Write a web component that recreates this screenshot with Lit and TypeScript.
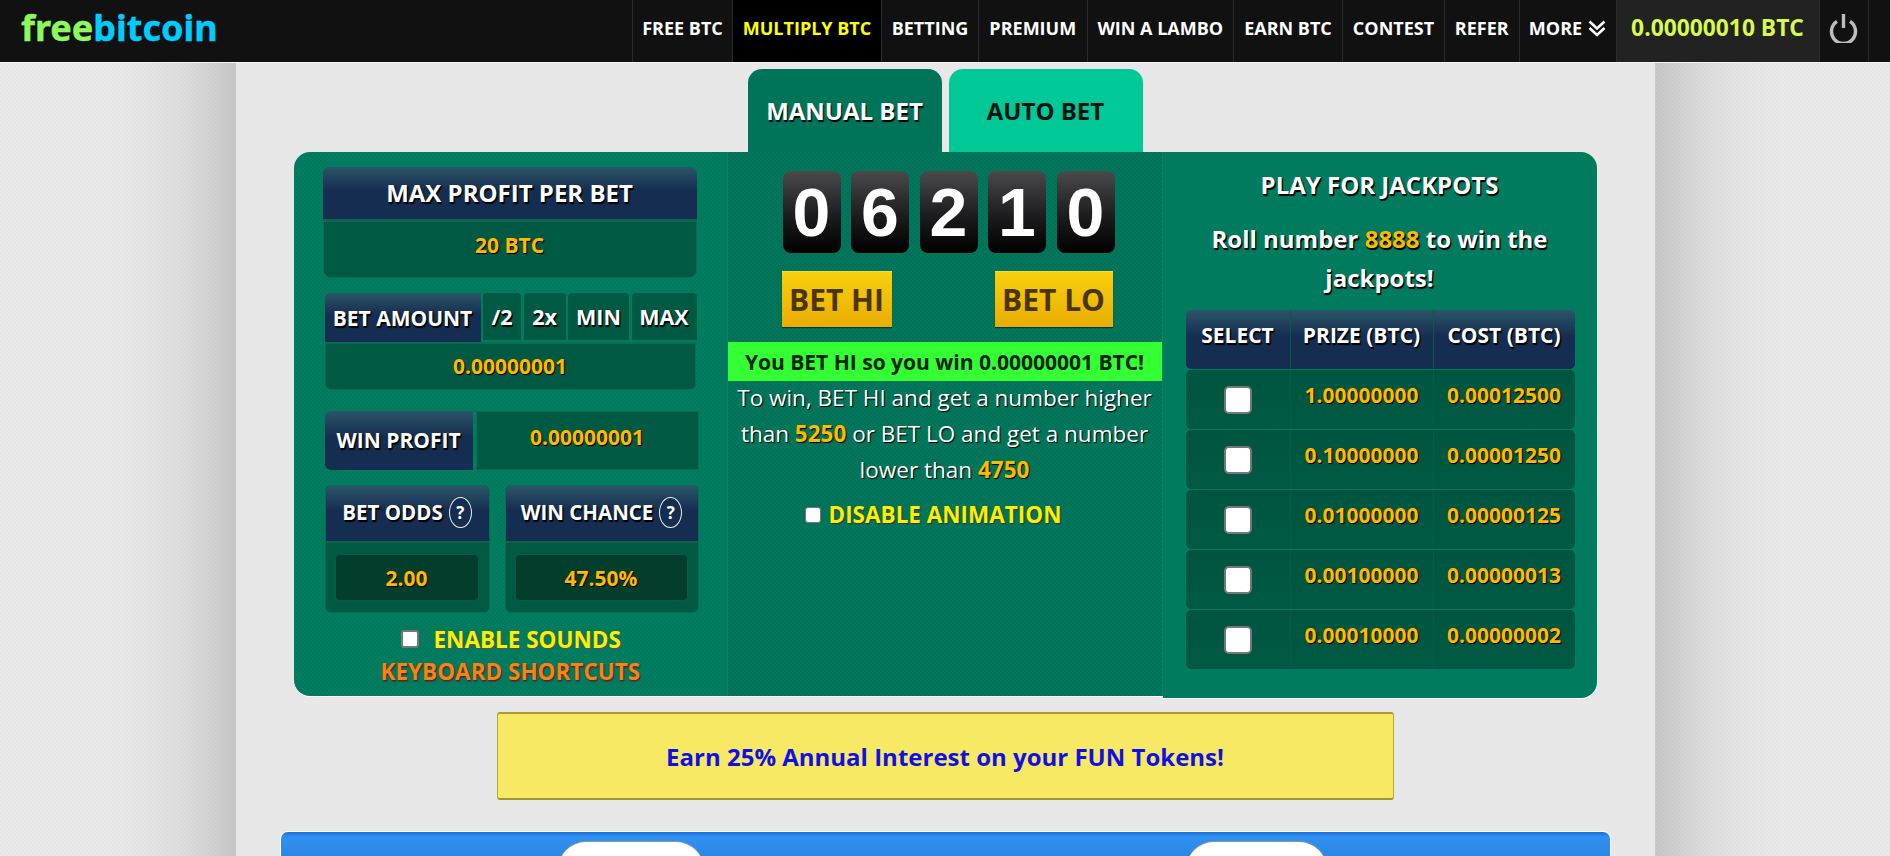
import { LitElement, html, css } from "lit";
import { customElement } from "lit/decorators.js";

const NAV = ["FREE BTC", "MULTIPLY BTC", "BETTING", "PREMIUM", "WIN A LAMBO", "EARN BTC", "CONTEST", "REFER"];
const ROWS = [
  ["1.00000000", "0.00012500"],
  ["0.10000000", "0.00001250"],
  ["0.01000000", "0.00000125"],
  ["0.00100000", "0.00000013"],
  ["0.00010000", "0.00000002"],
];

@customElement("app-root")
export class AppRoot extends LitElement {
  static styles = css`
    :host {
      display: block;
      width: 1890px;
      height: 856px;
      overflow: hidden;
      font-family: "Open Sans", "Noto Sans", sans-serif;
      background: repeating-conic-gradient(#e9e9e9 0 25%, #e6e6e6 0 50%) 0 0 / 4px 4px;
      color: #fff;
    }
    nav {
      position: relative;
      z-index: 2;
      display: grid;
      grid-template-columns: 632px 100px 149px 97px 108.5px 146.5px 109px 102px 74.5px 97px 203px 49.5px 1fr;
      height: 62px;
      background: #111;
      border-bottom: 1px solid #f4f4f4;
    }
    .logo {
      padding: 7px 0 0 21px;
      font-family: "Noto Sans", sans-serif;
      font-weight: 700;
      font-size: 36px;
      line-height: 42px;
      letter-spacing: 0;
      color: #8cfa5f;
      -webkit-text-stroke: 0.4px currentColor;
    }
    .logo span { color: #00ccff; }
    .item {
      display: flex;
      align-items: center;
      justify-content: center;
      gap: 6px;
      border-left: 1px solid #2b2b2b;
      font-weight: 700;
      font-size: 18px;
      padding-bottom: 6px;
      white-space: nowrap;
    }
    .item.on { background: #000; color: #ff0; }
    .item.bal {
      background: #222;
      color: #d6fb4c;
      font-size: 22.8px;
      padding-bottom: 8px;
    }
    .item.end { min-width: 0; }

    .wrap {
      width: 1419px;
      height: 1200px;
      margin: -200px auto 0;
      padding-top: 200px;
      box-sizing: border-box;
      display: flex;
      flex-direction: column;
      align-items: center;
      background: repeating-conic-gradient(#e9e9e9 0 25%, #e6e6e6 0 50%) 0 0 / 4px 4px;
      box-shadow: 0 0 110px rgba(0, 0, 0, 0.3), 0 0 1px #fff;
    }
    .wrap > * { flex: none; }
    .tabs {
      display: flex;
      gap: 7px;
      margin-top: 6px;
    }
    .tab {
      width: 194px;
      height: 83px;
      border-radius: 14px 14px 0 0;
      display: flex;
      align-items: center;
      justify-content: center;
      box-sizing: border-box;
      font-weight: 700;
      font-size: 24px;
    }
    .tab.man { background: #007459; text-shadow: 1px 2px 1px #000; }
    .tab.auto { background: #00c896; color: #06130e; }

    .panel {
      display: grid;
      grid-template-columns: 433px 436px 434px;
      align-items: start;
      width: 1303px;
    }
    .col {
      box-sizing: border-box;
      background-image: repeating-conic-gradient(rgba(0, 0, 0, 0.02) 0 25%, rgba(255, 255, 255, 0.012) 0 50%);
      background-size: 4px 4px;
    }
    .left {
      height: 544px;
      background-color: #007b5e;
      border-radius: 16px 0 0 16px;
      padding: 15px 0 0 29px;
      box-shadow: 0 1px 0 #fff;
    }
    .mid {
      height: 544px;
      background-color: #007459;
      border-left: 1px solid #0a8366;
      border-right: 1px solid #0a8366;
      padding-top: 19px;
      box-shadow: 0 1px 0 #fff;
    }
    .right {
      height: 546px;
      background-color: #007b5e;
      border-radius: 0 16px 16px 0;
      padding-top: 14px;
      box-shadow: 0 1px 0 #fff;
    }
    .sh { text-shadow: 1px 1px 1px #000, 1px 2px 1px #000; }
    .gold { color: #ffb900; font-weight: 700; text-shadow: 1px 1px 1px #000, 1px 1px 0 #3a2a00; }
    .head {
      background: linear-gradient(#2b5568 0, #152d50 45%, #152d50 100%);
      display: flex;
      align-items: center;
      justify-content: center;
      font-weight: 700;
      font-size: 20px;
    }
    .cell {
      background: #005a43;
      display: flex;
      align-items: center;
      justify-content: center;
      font-size: 21px;
      box-sizing: border-box;
    }
    .maxhead {
      width: 374px;
      height: 54px;
      border-radius: 6px 6px 0 0;
      border-bottom: 2px solid #10624f;
      box-sizing: border-box;
      padding-bottom: 2px;
      font-size: 24px;
    }
    .maxval {
      width: 374px;
      height: 57px;
      border-radius: 0 0 8px 8px;
      border: 1px solid #0a6c53;
      padding-bottom: 10px;
    }
    .betgrp {
      width: 371px;
      margin: 15px 0 0 2px;
    }
    .betrow {
      display: grid;
      grid-template-columns: 156px 38px 42px 61px 65px;
      column-gap: 2.5px;
      height: 49px;
      width: 371px;
    }
    .betrow .head { border-radius: 5px 0 0 0; font-size: 21px; }
    .betrow .cell {
      font-size: 21.5px;
      font-weight: 700;
      height: 47px;
      border-radius: 4px 4px 0 0;
      color: #fff;
    }
    .betval {
      height: 48px;
      border-radius: 0 0 6px 6px;
      border: 1px solid #0a6c53;
      border-top: 2px solid #0a6c53;
      padding-bottom: 2px;
    }
    .winrow {
      display: grid;
      grid-template-columns: 148px 223px;
      column-gap: 3px;
      margin: 21px 0 0 2px;
      width: 374px;
      height: 59px;
    }
    .winrow .head { border-radius: 6px 0 0 6px; font-size: 21px; padding-bottom: 2px; }
    .winrow .cell { border: 1px solid #0a6c53; padding-bottom: 8px; }
    .odds {
      display: grid;
      grid-template-columns: 165px 194px;
      column-gap: 15px;
      margin: 15px 0 0 2px;
      width: 374px;
    }
    .ob {
      height: 128px;
      background: #005a43;
      border-radius: 6px;
      overflow: hidden;
      border: 1px solid #0a6c53;
      box-sizing: border-box;
    }
    .ob .head {
      height: 57px;
      gap: 6px;
      border-bottom: 2px solid #10624f;
      box-sizing: border-box;
      padding-bottom: 3px;
      font-size: 20.5px;
    }
    .q {
      display: inline-flex;
      align-items: center;
      justify-content: center;
      width: 23px;
      height: 31px;
      border: 1px solid #eee;
      border-radius: 50%;
      font-size: 17px;
      background: #152d50;
      box-sizing: border-box;
    }
    .inner {
      margin: 11px 10px 0 9px;
      height: 47px;
      background: #033d2c;
      border-radius: 5px;
      border: 1px solid #0a5a45;
      box-sizing: border-box;
      display: flex;
      align-items: center;
      justify-content: center;
      font-size: 21px;
    }
    .sounds {
      display: flex;
      align-items: center;
      margin: 14px 0 0 78px;
      gap: 15px;
      height: 24px;
      font-weight: 700;
      font-size: 22.5px;
      color: #ffee00;
      text-shadow: 1px 1px 1px #555;
      white-space: nowrap;
    }
    input[type="checkbox"] {
      appearance: none;
      margin: 0;
      flex: none;
      background: #fff;
      border: 1px solid #777;
      border-radius: 3px;
      box-sizing: border-box;
    }
    .sounds input { width: 18px; height: 18px; border-width: 2px; }
    .keys {
      margin: 6px 0 0 58px;
      font-weight: 700;
      font-size: 22.5px;
      line-height: 30px;
      color: #ff7f0f;
      text-shadow: 1px 1px 1px #333, 1px 2px 1px #444;
      white-space: nowrap;
    }

    .digits {
      display: flex;
      gap: 10.5px;
      margin-left: 55px;
    }
    .digit {
      width: 58px;
      height: 82px;
      border-radius: 8px;
      background: linear-gradient(#4a4a4c 0, #1c1c1e 55%, #000 100%);
      display: flex;
      align-items: center;
      justify-content: center;
      font-family: "Liberation Sans", Arial, sans-serif;
      font-weight: 700;
      font-size: 68px;
      color: #fff;
    }
    .btns {
      display: flex;
      margin: 18px 0 0 54px;
    }
    .btn {
      display: flex;
      align-items: center;
      justify-content: center;
      height: 56px;
      box-sizing: border-box;
      background: linear-gradient(#f8d00b, #e9ad05);
      border-top: 1px solid #f5da55;
      box-shadow: 0 1px 1px rgba(0, 0, 0, 0.5);
      color: #4a3603;
      font-weight: 700;
      font-size: 30px;
    }
    .btn.hi { width: 110px; }
    .btn.lo { width: 118px; margin-left: 103px; }
    .result {
      margin-top: 15px;
      height: 39px;
      background: #33ff33;
      color: #021;
      display: flex;
      align-items: center;
      justify-content: center;
      font-weight: 700;
      font-size: 21px;
    }
    .rules {
      text-align: center;
      font-size: 22.5px;
      line-height: 36px;
      padding: 0 4px;
      margin-top: -1px;
      text-shadow: 1px 1px 1px #000;
    }
    .rules b { color: #ffb900; }
    .anim {
      display: flex;
      align-items: center;
      gap: 8px;
      margin: 11px 0 0 77px;
      font-weight: 700;
      font-size: 22.5px;
      color: #ffee00;
      text-shadow: 1px 1px 1px #333;
      white-space: nowrap;
    }
    .anim input { width: 16px; height: 16px; }

    .right h3 {
      margin: 0;
      text-align: center;
      font-size: 24px;
      line-height: 38px;
    }
    .right p {
      margin: 15px 0 0;
      text-align: center;
      font-weight: 700;
      font-size: 24px;
      line-height: 39px;
      padding: 0 30px;
    }
    .right p span { color: #ffb900; }
    .tbl {
      display: flex;
      flex-direction: column;
      gap: 1px;
      width: 389px;
      margin: 13px 0 0 23px;
    }
    .tr {
      display: grid;
      grid-template-columns: 104px 143px 142px;
      height: 59px;
      border-radius: 5px;
      overflow: hidden;
    }
    .tr.h { background: linear-gradient(#2b5568 0, #152d50 45%, #152d50 100%); }
    .tr.b { background: linear-gradient(#00553f, #005a43); }
    .tr > div {
      display: flex;
      align-items: center;
      justify-content: center;
      border-left: 1px solid #0b5a47;
      font-size: 21px;
      padding-bottom: 9px;
      box-sizing: border-box;
    }
    .tr > div:first-child { border-left: 0; }
    .tr.h > div { font-weight: 700; font-size: 21px; padding-bottom: 10px; }
    .tr.b > div:first-child { padding-bottom: 0; }
    .tr input { width: 28px; height: 28px; border-width: 2px; border-radius: 5px; }

    .promo {
      width: 897px;
      height: 88px;
      margin-top: 14px;
      box-sizing: border-box;
      background: #f8e964;
      border-top: 2px solid #a99b3a;
      border-bottom: 2px solid #a3962f;
      border-left: 1px solid #b9aa2c;
      border-right: 1px solid #b9aa2c;
      border-radius: 3px;
      display: flex;
      align-items: center;
      justify-content: center;
      color: #1010e6;
      font-weight: 700;
      font-size: 24px;
    }
    .blue {
      width: 1329px;
      height: 120px;
      margin-top: 32px;
      box-sizing: border-box;
      background: linear-gradient(#1b6fd8 0, #3091f0 5px, #2c86e6 24px);
      border-radius: 7px 7px 0 0;
      box-shadow: 0 0 0 1px #fff;
      padding-top: 10px;
      display: flex;
    }
    .pill {
      height: 60px;
      background: #fff;
      border-radius: 28px 28px 0 0;
      box-shadow: 0 -1px 1px #8a98a8;
    }
    .pill.a { width: 146px; margin-left: 277px; }
    .pill.b { width: 141px; margin-left: 482px; }
  `;

  render() {
    return html`
      <nav>
        <div class="logo">free<span>bitcoin</span></div>
        ${NAV.map((n, i) => html`<div class="item ${i === 1 ? "on" : ""}">${n}</div>`)}
        <div class="item">
          MORE
          <svg width="18" height="17" viewBox="0 0 18 17" fill="none" stroke="#fff" stroke-width="2.6">
            <path d="M1.5 1.5 9 8.5 16.5 1.5" />
            <path d="M1.5 8 9 15 16.5 8" />
          </svg>
        </div>
        <div class="item bal">0.00000010 BTC</div>
        <div class="item">
          <svg width="29" height="30" viewBox="0 0 29 30" fill="none" stroke="#bdbdbd" stroke-width="3.4">
            <path d="M8 8.4a12 12 0 1 0 13 0" />
            <path d="M14.5 1v14" />
          </svg>
        </div>
        <div class="item end"></div>
      </nav>
      <div class="wrap">
        <div class="tabs">
          <div class="tab man">MANUAL BET</div>
          <div class="tab auto">AUTO BET</div>
        </div>
        <div class="panel">
          <div class="col left">
            <div class="head maxhead sh">MAX PROFIT PER BET</div>
            <div class="cell maxval gold">20 BTC</div>
            <div class="betgrp">
              <div class="betrow">
                <div class="head sh">BET AMOUNT</div>
                ${["/2", "2x", "MIN", "MAX"].map((t) => html`<div class="cell sh">${t}</div>`)}
              </div>
              <div class="cell betval gold">0.00000001</div>
            </div>
            <div class="winrow">
              <div class="head sh">WIN PROFIT</div>
              <div class="cell gold">0.00000001</div>
            </div>
            <div class="odds">
              <div class="ob">
                <div class="head"><span class="sh">BET ODDS</span><span class="q">?</span></div>
                <div class="inner gold">2.00</div>
              </div>
              <div class="ob">
                <div class="head"><span class="sh">WIN CHANCE</span><span class="q">?</span></div>
                <div class="inner gold">47.50%</div>
              </div>
            </div>
            <label class="sounds"><input type="checkbox" />ENABLE SOUNDS</label>
            <div class="keys">KEYBOARD SHORTCUTS</div>
          </div>
          <div class="col mid">
            <div class="digits">
              ${["0", "6", "2", "1", "0"].map((d) => html`<div class="digit">${d}</div>`)}
            </div>
            <div class="btns">
              <div class="btn hi">BET HI</div>
              <div class="btn lo">BET LO</div>
            </div>
            <div class="result">You BET HI so you win 0.00000001 BTC!</div>
            <div class="rules">
              To win, BET HI and get a number higher than <b>5250</b> or BET LO and get a number lower than <b>4750</b>
            </div>
            <label class="anim"><input type="checkbox" />DISABLE ANIMATION</label>
          </div>
          <div class="col right">
            <h3 class="sh">PLAY FOR JACKPOTS</h3>
            <p class="sh">Roll number <span>8888</span> to win the jackpots!</p>
            <div class="tbl">
              <div class="tr h sh">
                <div>SELECT</div>
                <div>PRIZE (BTC)</div>
                <div>COST (BTC)</div>
              </div>
              ${ROWS.map(
                (r) => html`<div class="tr b">
                  <div><input type="checkbox" /></div>
                  <div class="gold">${r[0]}</div>
                  <div class="gold">${r[1]}</div>
                </div>`
              )}
            </div>
          </div>
        </div>
        <div class="promo">Earn 25% Annual Interest on your FUN Tokens!</div>
        <div class="blue">
          <div class="pill a"></div>
          <div class="pill b"></div>
        </div>
      </div>
    `;
  }
}
